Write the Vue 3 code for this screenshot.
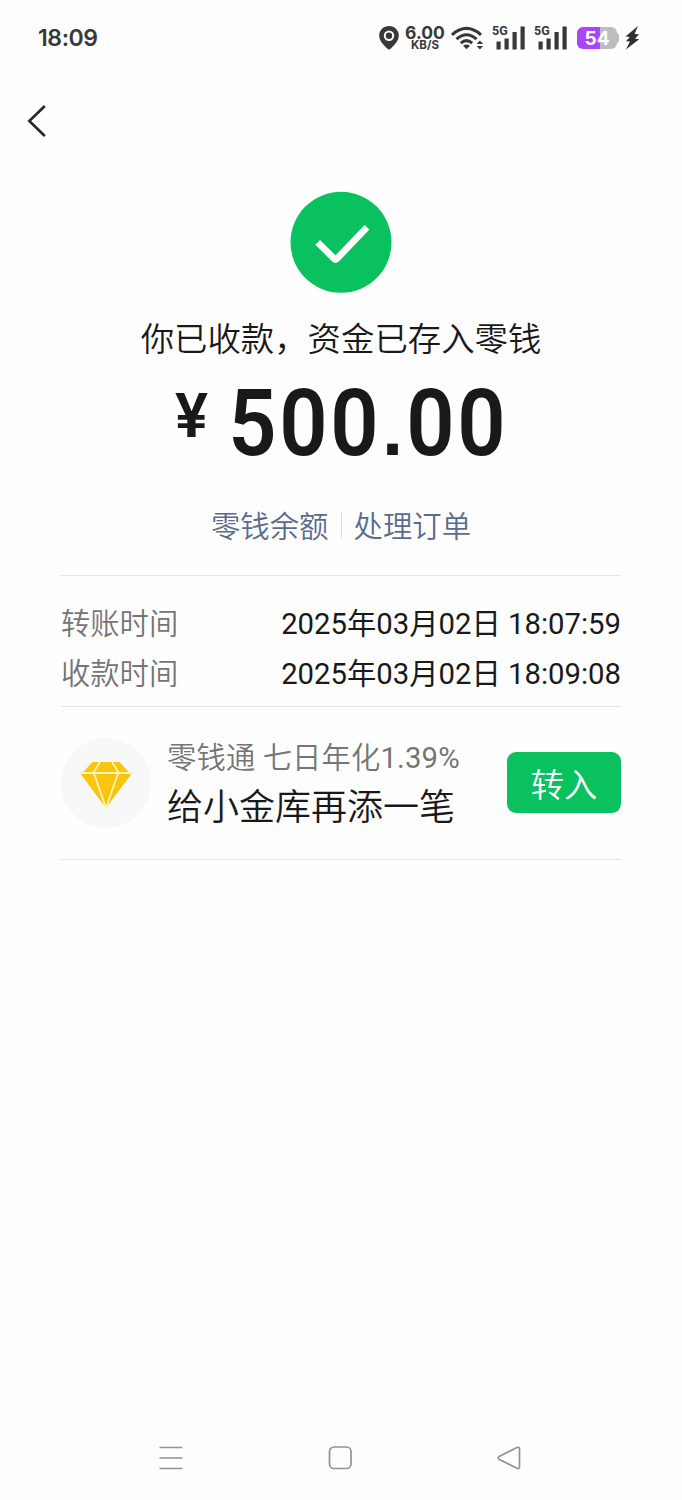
<script setup>
const amount = [...'500.00']
const records = [
  { label: '转账时间', value: '2025年03月02日 18:07:59' },
  { label: '收款时间', value: '2025年03月02日 18:09:08' },
]
</script>

<template>
  <main class="screen">
    <header class="status">
      <span class="clock">18:09</span>
      <div class="indicators">
        <svg class="pin" width="20" height="24" viewBox="0 0 20 24">
          <path d="M10 0C4.500 0 .2 4.200 .2 9.500C.2 15 5 19.500 8.500 22.800Q10 24 11.500 22.800C15 19.500 19.800 15 19.800 9.500C19.800 4.200 15.500 0 10 0Z" fill="#38383a" />
          <circle cx="10" cy="9.700" r="4.200" fill="none" stroke="#fff" stroke-width="2" />
        </svg>
        <div class="speed"><b>6.00</b><span>KB/S</span></div>
        <svg class="wifi" width="33" height="24" viewBox="0 0 33 24">
          <g fill="none" stroke="#38383a" stroke-width="3">
            <path d="M1 8.800Q15.500-4 30 8.800" />
            <path d="M5.500 13.200Q15.500 4.200 25.500 13.200" />
            <path d="M9.800 17.200Q15.500 12 21.200 17.200" />
          </g>
          <path d="M12 19.800Q15.500 17.400 19 19.800L15.500 23.300Z" fill="#38383a" />
          <path d="M25.700 18L28.900 14.500L32.100 18ZM25.700 20L28.900 23.500L32.100 20Z" fill="#38383a" />
        </svg>
        <div v-for="n in 2" :key="n" class="signal">
          <span>5G</span>
          <svg width="34" height="24" viewBox="0 0 34 24">
            <path d="M4.500 15.500h4.200V23.500H4.500ZM12.500 12.500h4.200V23.500H12.500ZM20.500 6h4.200V23.500H20.500ZM28.500 .5h4.200V23.500H28.500Z" fill="#38383a" />
          </svg>
        </div>
        <div class="battery"><span>54</span></div>
        <svg class="bolt" width="15" height="24" viewBox="0 0 15 24">
          <path d="M13 0L.5 10.500L4.800 10.900L1 15.300L5 15.600L.8 23.500L14.200 13.300L10 12.800L14 8.300L9.600 8Z" fill="#303032" />
        </svg>
      </div>
    </header>

    <nav class="nav">
      <svg width="20" height="34" viewBox="0 0 20 34">
        <path d="M17.800 2L2.300 17L17.800 32" fill="none" stroke="#262626" stroke-width="2.600" />
      </svg>
    </nav>

    <section class="result">
      <svg class="success" width="102" height="102" viewBox="0 0 102 102">
        <circle cx="51" cy="51.300" r="50.500" fill="#0ac160" />
        <path d="M27.700 51.300L44.300 67.900Q45.500 69.100 46.700 67.900L77 36.300" fill="none" stroke="#fff" stroke-width="6.700" />
      </svg>
      <h1 class="title">你已收款，资金已存入零钱</h1>
      <div class="amount">
        <span class="yen">¥</span>
        <span v-for="(c, i) in amount" :key="i" :class="c === '.' ? 'point' : 'digit'">{{ c }}</span>
      </div>
      <div class="links">
        <a>零钱余额</a><i></i><a>处理订单</a>
      </div>
    </section>

    <section class="records">
      <div v-for="r in records" :key="r.label" class="record">
        <span class="label">{{ r.label }}</span>
        <span class="value">{{ r.value }}</span>
      </div>
    </section>

    <section class="promo">
      <div class="badge">
        <svg width="52" height="48" viewBox="0 0 52 48">
          <path d="M12.500 1H39.500L51 13.500L26 47L1 13.500Z" fill="#f9c40c" />
          <path d="M0 12H52M13 12L20 1M39 12L32 1M14 12.500L26 47L38 12.500" fill="none" stroke="#fff3bd" stroke-width="1.800" />
        </svg>
      </div>
      <div class="copy">
        <p class="rate">零钱通 七日年化<span>1.39%</span></p>
        <p class="pitch">给小金库再添一笔</p>
      </div>
      <button class="transfer">转入</button>
    </section>

    <footer class="system">
      <svg width="26" height="26" viewBox="0 0 26 26"><path d="M1.500 2.500H24.500M1.500 13H24.500M1.500 23.500H24.500" /></svg>
      <svg width="26" height="26" viewBox="0 0 26 26"><rect x="1.500" y="2" width="21.500" height="21.500" rx="4.500" /></svg>
      <svg width="26" height="26" viewBox="0 0 26 26"><path d="M1 11.500L19 2.500Q21.500 1.600 21.500 4V21.800Q21.500 24.200 19 23.300L1 14.200Q-.5 13 1 11.500Z" /></svg>
    </footer>
  </main>
</template>

<style>
body { margin: 0; background: #fefefe; }
</style>

<style scoped>
* { box-sizing: border-box; }
.screen {
  width: 682px;
  height: 1500px;
  display: flex;
  flex-direction: column;
  background: #fefefe;
  color: #191919;
  font-family: Roboto, "Noto Sans CJK SC", sans-serif;
  overflow: hidden;
}
.status {
  height: 75px;
  flex: none;
  display: flex;
  align-items: center;
  justify-content: space-between;
  padding: 0 42px 0 38px;
  color: #38383a;
  font-family: Inter, sans-serif;
}
.clock { font-size: 23px; font-weight: 600; letter-spacing: -0.4px; }
.indicators { display: flex; align-items: center; }
.speed {
  width: 38px;
  margin: 0 7px;
  display: flex;
  flex-direction: column;
  align-items: center;
  white-space: nowrap;
}
.speed b { font-size: 17.5px; line-height: 14px; font-weight: 650; }
.speed span { font-size: 11.5px; line-height: 10px; font-weight: 700; }
.signal { position: relative; width: 34px; height: 24px; margin-left: 8px; }
.signal span {
  position: absolute;
  left: 0;
  top: -1px;
  font: 700 12.5px/12px Roboto, sans-serif;
}
.signal svg { display: block; }
.battery {
  position: relative;
  width: 40px;
  height: 22px;
  margin-left: 9px;
  border-radius: 6px;
  background: linear-gradient(90deg, #a945f5 57%, #bdbdbd 57%);
  color: #fff;
  font-size: 19px;
  font-weight: 700;
  line-height: 23px;
  text-align: center;
}
.battery::after {
  content: "";
  position: absolute;
  right: -2px;
  top: 6px;
  width: 3px;
  height: 10px;
  border-radius: 0 3px 3px 0;
  background: #bdbdbd;
}
.bolt { margin-left: 8px; }
.nav { height: 92px; flex: none; display: flex; align-items: center; padding-left: 27px; }
.result {
  height: 408px;
  flex: none;
  padding-top: 24px;
  display: flex;
  flex-direction: column;
  align-items: center;
}
.success { flex: none; }
.title { margin: 22px 0 0; font-size: 33.4px; line-height: 50px; font-weight: 350; white-space: nowrap; }
.amount {
  height: 100px;
  width: 332px;
  margin-top: 8px;
  display: flex;
  font-weight: 600;
  font-size: 92px;
  line-height: 101px;
}
.yen { width: 53px; padding-top: 11px; font-size: 62px; line-height: 64px; }
.digit, .point { display: flex; justify-content: center; }
.digit { width: 51px; transform: scaleX(0.92); }
.point { width: 25px; font: 700 76px/111px "Liberation Sans", sans-serif; }
.links {
  display: flex;
  align-items: center;
  margin-top: 34px;
  font-size: 29.4px;
  font-weight: 350;
  line-height: 40px;
  color: #5b6b8c;
}
.links i { width: 1px; height: 26px; margin: 0 12px; background: #dedede; transform: translateY(-2px); }
.records {
  height: 132px;
  flex: none;
  margin: 0 61px;
  padding-top: 23px;
  border-top: 1px solid #e4e4e4;
  border-bottom: 1px solid #e4e4e4;
}
.record {
  height: 50px;
  display: flex;
  align-items: center;
  justify-content: space-between;
  font-size: 29.3px;
  line-height: 50px;
  white-space: nowrap;
}
.label { color: #757575; font-weight: 350; }
.promo {
  height: 153px;
  flex: none;
  margin: 0 61px;
  display: flex;
  align-items: center;
  border-bottom: 1px solid #e4e4e4;
}
.badge {
  width: 90px;
  height: 90px;
  border-radius: 50%;
  background: #f8f8f8;
  display: flex;
  align-items: center;
  justify-content: center;
  padding-top: 3px;
}
.copy { flex: 1; margin-left: 16px; padding-top: 4px; white-space: nowrap; }
.copy p { margin: 0; }
.rate { font-size: 29.3px; line-height: 46px; color: #757575; font-weight: 350; letter-spacing: 0.15px; }
.rate span { font-weight: 400; }
.pitch { font-size: 36px; line-height: 54px; font-weight: 350; }
.transfer {
  width: 114px;
  height: 61px;
  margin-bottom: 1px;
  padding: 0;
  border: 0;
  border-radius: 9px;
  background: #0ac160;
  color: #fff;
  font: 350 33.3px/61px "Noto Sans CJK SC", sans-serif;
}
.system {
  margin-top: auto;
  height: 84px;
  flex: none;
  padding: 0 158px;
  display: flex;
  align-items: center;
  justify-content: space-between;
}
.system svg { fill: none; stroke: #929292; stroke-width: 1.700; overflow: visible; }
</style>
